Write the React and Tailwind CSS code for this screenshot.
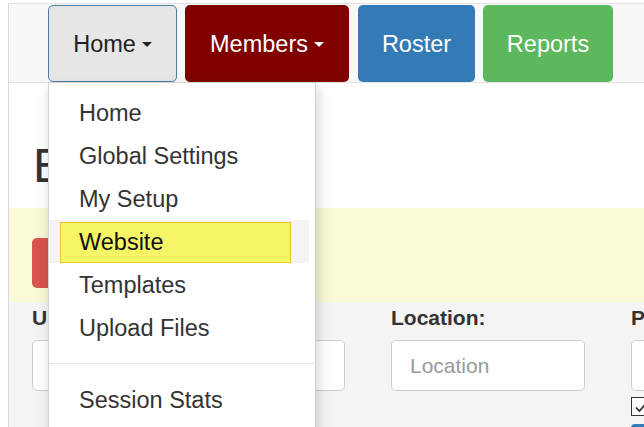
import React from 'react';

const Caret = () => (
  <span className="ml-[6px] inline-block h-0 w-0 border-x-[5px] border-t-[5px] border-x-transparent border-t-current align-middle" />
);

const menuItems = ['Home', 'Global Settings', 'My Setup'];
const menuItems2 = ['Templates', 'Upload Files'];

const App = () => {
  return (
    <div
      className="h-[427px] w-[644px] overflow-hidden bg-white pl-[8px] pt-[3px] text-[#333]"
      style={{ fontFamily: '"Liberation Sans", Arial, sans-serif' }}
    >
      <div className="flex h-full flex-col border-l border-[#d9d9d9]">
        {/* top nav */}
        <div className="flex h-[80px] shrink-0 items-start border-y border-[#e3e3e3] bg-[#f8f8f8] pl-[39px]">
          <div className="relative mt-[1px] h-[77px] w-[129px]">
            <button className="flex h-full w-full items-center justify-center rounded-[5px] border border-[#4d7eaa] bg-[#e6e6e6] pt-[2px] text-[23.5px] text-[#222]">
              Home
              <Caret />
            </button>

            {/* dropdown */}
            <div className="absolute left-0 top-full z-10 w-[268px] border border-[#d4d4d4] bg-white pt-[8px] pb-[20px] text-[23.5px] shadow-[2px_6px_12px_rgba(0,0,0,0.18)]">
              {menuItems.map((item) => (
                <div key={item} className="flex h-[43px] items-center pl-[30px] pt-[2px]">
                  {item}
                </div>
              ))}
              <div className="mr-[6px] h-[43px] bg-[#f4f4f4] pl-[11px] pt-[2px]">
                <div className="flex h-[41px] w-[231px] items-center border border-[#e8c52c] bg-[#f5f566] pl-[18px] pt-[1px] text-[#111]">
                  Website
                </div>
              </div>
              {menuItems2.map((item) => (
                <div key={item} className="flex h-[43px] items-center pl-[30px] pt-[2px]">
                  {item}
                </div>
              ))}
              <div className="my-[14px] h-px bg-[#e5e5e5]" />
              <div className="flex h-[43px] items-center pl-[30px] pt-[2px]">Session Stats</div>
            </div>
          </div>
          <button className="ml-[8px] mt-[1px] flex h-[77px] w-[164px] items-center justify-center rounded-[5px] bg-[#800000] pt-[2px] text-[23.5px] text-white">
            Members
            <Caret />
          </button>
          <button className="ml-[9px] mt-[1px] h-[77px] w-[117px] rounded-[5px] bg-[#337ab7] pt-[2px] text-[23.5px] text-white">
            Roster
          </button>
          <button className="ml-[8px] mt-[1px] h-[77px] w-[130px] rounded-[5px] bg-[#5cb85c] pt-[2px] text-[23.5px] text-white">
            Reports
          </button>
        </div>

        {/* page content */}
        <h1 className="mt-[56px] pl-[24px] text-[48px] leading-[53px] text-[#333]">Edit</h1>

        <div className="mt-[16px] h-[94px] shrink-0 bg-[#f9f9d6] pl-[23px] pt-[30px]">
          <div className="h-[50px] w-[140px] rounded-[5px] bg-[#d9534f]" />
        </div>

        <div className="flex flex-1 bg-[#f4f4f4] pl-[23px] pt-[4px]">
          <div className="w-[313px] shrink-0">
            <div className="text-[21px] font-bold leading-[24px]">User:</div>
            <div className="mt-[10px] h-[51px] rounded-[5px] border border-[#ccc] bg-white" />
          </div>
          <div className="ml-[46px] w-[194px] shrink-0">
            <div className="text-[21px] font-bold leading-[24px]">Location:</div>
            <div className="mt-[10px] flex h-[51px] items-center rounded-[5px] border border-[#ccc] bg-white pl-[18px] text-[21px] text-[#999]">
              Location
            </div>
          </div>
          <div className="ml-[46px] w-[200px] shrink-0">
            <div className="text-[21px] font-bold leading-[24px]">Phone:</div>
            <div className="mt-[10px] h-[51px] rounded-[5px] border border-[#ccc] bg-white" />
            <div className="mt-[6px] flex h-[19px] w-[19px] items-center justify-center border border-[#333] bg-white">
              <svg width="14" height="14" viewBox="0 0 14 14" fill="none">
                <path d="M2 7.5 L5.5 11 L12 3.5" stroke="#222" strokeWidth="1.6" />
              </svg>
            </div>
            <div className="mt-[8px] h-[30px] w-[100px] rounded-[4px] bg-[#337ab7]" />
          </div>
        </div>
      </div>
    </div>
  );
};

export default App;
